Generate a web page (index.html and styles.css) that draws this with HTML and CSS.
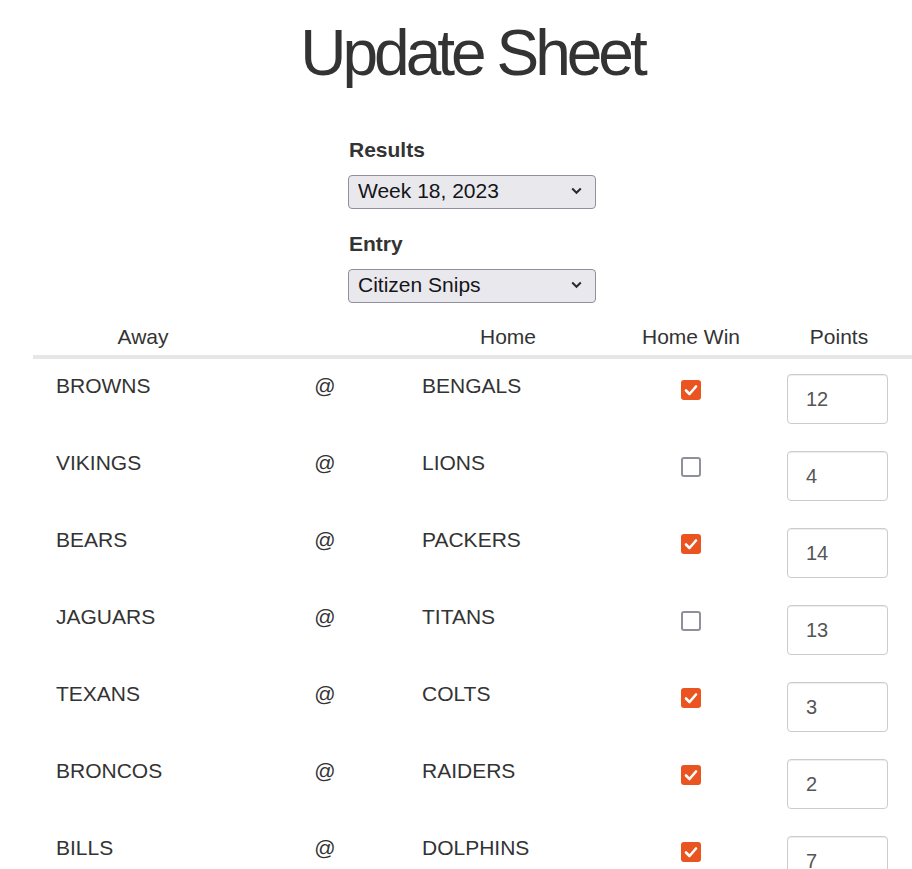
FILE: index.html
```html
<!DOCTYPE html>
<html>
<head>
<meta charset="utf-8">
<link rel="stylesheet" href="styles.css">
</head>
<body>
<div class="page">
  <h1 class="title">Update Sheet</h1>
  <form class="picker">
    <label class="field-label" for="results">Results</label>
    <div class="select-wrap">
      <select id="results" class="select"><option>Week 18, 2023</option></select>
      <svg class="chev" width="11" height="8" viewBox="0 0 11 8"><path d="M1.2 1.5 L5.5 5.8 L9.8 1.5" fill="none" stroke="#2b2b2b" stroke-width="2"/></svg>
    </div>
    <label class="field-label" for="entry">Entry</label>
    <div class="select-wrap">
      <select id="entry" class="select"><option>Citizen Snips</option></select>
      <svg class="chev" width="11" height="8" viewBox="0 0 11 8"><path d="M1.2 1.5 L5.5 5.8 L9.8 1.5" fill="none" stroke="#2b2b2b" stroke-width="2"/></svg>
    </div>
  </form>
  <table class="games">
    <colgroup>
      <col class="c-away"><col class="c-at"><col class="c-home"><col class="c-win"><col class="c-pts">
    </colgroup>
    <thead>
      <tr><th>Away</th><th></th><th>Home</th><th>Home Win</th><th>Points</th></tr>
    </thead>
    <tbody>
      <tr><td>BROWNS</td><td class="at">@</td><td class="home">BENGALS</td><td class="win"><span class="check on"><svg viewBox="0 0 20 20" width="20" height="20"><path d="M5 10.5 L8.5 14 L15 6.5" fill="none" stroke="#fff" stroke-width="2.6" stroke-linecap="round" stroke-linejoin="round"/></svg></span></td><td><input class="pts" type="text" value="12"></td></tr>
      <tr><td>VIKINGS</td><td class="at">@</td><td class="home">LIONS</td><td class="win"><span class="check"></span></td><td><input class="pts" type="text" value="4"></td></tr>
      <tr><td>BEARS</td><td class="at">@</td><td class="home">PACKERS</td><td class="win"><span class="check on"><svg viewBox="0 0 20 20" width="20" height="20"><path d="M5 10.5 L8.5 14 L15 6.5" fill="none" stroke="#fff" stroke-width="2.6" stroke-linecap="round" stroke-linejoin="round"/></svg></span></td><td><input class="pts" type="text" value="14"></td></tr>
      <tr><td>JAGUARS</td><td class="at">@</td><td class="home">TITANS</td><td class="win"><span class="check"></span></td><td><input class="pts" type="text" value="13"></td></tr>
      <tr><td>TEXANS</td><td class="at">@</td><td class="home">COLTS</td><td class="win"><span class="check on"><svg viewBox="0 0 20 20" width="20" height="20"><path d="M5 10.5 L8.5 14 L15 6.5" fill="none" stroke="#fff" stroke-width="2.6" stroke-linecap="round" stroke-linejoin="round"/></svg></span></td><td><input class="pts" type="text" value="3"></td></tr>
      <tr><td>BRONCOS</td><td class="at">@</td><td class="home">RAIDERS</td><td class="win"><span class="check on"><svg viewBox="0 0 20 20" width="20" height="20"><path d="M5 10.5 L8.5 14 L15 6.5" fill="none" stroke="#fff" stroke-width="2.6" stroke-linecap="round" stroke-linejoin="round"/></svg></span></td><td><input class="pts" type="text" value="2"></td></tr>
      <tr><td>BILLS</td><td class="at">@</td><td class="home">DOLPHINS</td><td class="win"><span class="check on"><svg viewBox="0 0 20 20" width="20" height="20"><path d="M5 10.5 L8.5 14 L15 6.5" fill="none" stroke="#fff" stroke-width="2.6" stroke-linecap="round" stroke-linejoin="round"/></svg></span></td><td><input class="pts" type="text" value="7"></td></tr>
    </tbody>
  </table>
</div>
</body>
</html>
```

FILE: styles.css
```css
html, body {
  margin: 0;
  padding: 0;
  overflow: hidden;
  background: #fff;
}
body {
  font-family: "Liberation Sans", Arial, sans-serif;
  color: #333;
  font-size: 21px;
  line-height: 28px;
}
.page {
  width: 948px;
  height: 869px;
  overflow: hidden;
}
.title {
  margin: 17px 0 47px;
  padding-right: 4px;
  font-size: 64px;
  line-height: 72px;
  font-weight: 400;
  letter-spacing: -4px;
  text-align: center;
  color: #333;
}
.picker {
  width: 248px;
  margin: 0 auto 12px;
  padding-right: 2px;
  display: flex;
  flex-direction: column;
}
.field-label {
  display: block;
  font-weight: 700;
  font-size: 21px;
  line-height: 28px;
  margin-bottom: 11px;
}
.select-wrap {
  position: relative;
  margin-bottom: 21px;
}
.select-wrap:last-child {
  margin-bottom: 0;
}
.select {
  appearance: none;
  -webkit-appearance: none;
  box-sizing: border-box;
  width: 248px;
  height: 34px;
  margin: 0 0 0 -1px;
  padding: 0 0 3px 9px;
  border: 1px solid #8f8f9d;
  border-radius: 4px;
  background: #e9e9ed;
  font-family: "Liberation Sans", Arial, sans-serif;
  font-size: 21px;
  color: #15141a;
  display: block;
}
.chev {
  position: absolute;
  right: 15px;
  top: 12px;
  pointer-events: none;
}
.games {
  margin-left: 33px;
  width: 882px;
  border-collapse: collapse;
  table-layout: fixed;
}
.c-away { width: 220px; }
.c-at { width: 144px; }
.c-home { width: 222px; }
.c-win { width: 144px; }
.c-pts { width: 152px; }
.games th {
  font-weight: 400;
  text-align: center;
  padding: 8px 0 4px;
  border-bottom: 4px solid #e6e6e6;
}
.games td {
  vertical-align: top;
  padding: 13px 24px 12px 23px;
  text-align: left;
}
.games td.home {
  padding-left: 25px;
}
.games td.at {
  text-align: center;
  padding-left: 0;
  padding-right: 0;
}
.games td.win {
  text-align: center;
  padding: 21px 0 0;
}
.check {
  display: inline-block;
  box-sizing: border-box;
  width: 20px;
  height: 20px;
  border: 2px solid #8f8f9d;
  border-radius: 3px;
  background: #fff;
  vertical-align: top;
}
.check.on {
  border: none;
  background: #e95420;
}
.check svg {
  display: block;
}
.pts {
  box-sizing: border-box;
  display: block;
  width: 101px;
  height: 50px;
  margin: 2px 0 0 1px;
  padding: 0 0 0 18px;
  border: 1px solid #ccc;
  border-radius: 4px;
  box-shadow: inset 0 1px 1px rgba(0,0,0,0.075);
  font-family: "Liberation Sans", Arial, sans-serif;
  font-size: 20px;
  color: #555;
  background: #fff;
}
```
